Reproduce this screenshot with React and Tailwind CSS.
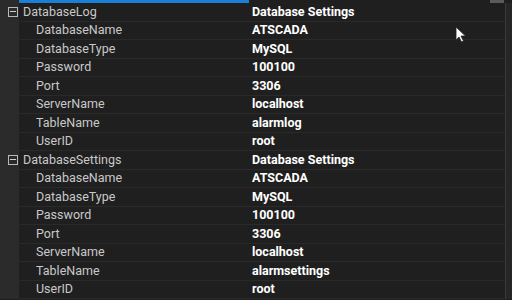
const groups = [
  {
    name: 'DatabaseLog',
    value: 'Database Settings',
    props: [
      ['DatabaseName', 'ATSCADA'],
      ['DatabaseType', 'MySQL'],
      ['Password', '100100'],
      ['Port', '3306'],
      ['ServerName', 'localhost'],
      ['TableName', 'alarmlog'],
      ['UserID', 'root'],
    ],
  },
  {
    name: 'DatabaseSettings',
    value: 'Database Settings',
    props: [
      ['DatabaseName', 'ATSCADA'],
      ['DatabaseType', 'MySQL'],
      ['Password', '100100'],
      ['Port', '3306'],
      ['ServerName', 'localhost'],
      ['TableName', 'alarmsettings'],
      ['UserID', 'root'],
    ],
  },
];

function Row({ label, value, group }) {
  return (
    <div className="flex h-[18.5px] border-b border-[#2a2a2a]">
      <div className="w-[19px] shrink-0 flex items-center justify-end pr-[1px] bg-[#2b2b2b]">
        {group && (
          <span className="w-[10px] h-[10px] border border-[#b8b8b8] flex items-center justify-center">
            <span className="w-[6px] h-px bg-[#d0d0d0]" />
          </span>
        )}
      </div>
      <div className={`w-[230px] shrink-0 flex items-center truncate text-[#c9c9c9] ${group ? 'pl-[4px]' : 'pl-[17px]'}`}>
        {label}
      </div>
      <div className="flex-1 flex items-center pl-[3px] font-bold text-white">{value}</div>
    </div>
  );
}

export default function App() {
  return (
    <div className="relative w-[512px] h-[300px] overflow-hidden bg-[#1f1f1f] text-[12.5px] leading-none font-['Roboto',sans-serif]">
      <div className="flex h-[3px]">
        <div className="w-[19px] bg-[#2b2b2b]" />
        <div className="w-[230px] bg-[#1c7fd6]" />
        <div className="flex-1" />
        <div className="w-[14px] bg-[#5a5a5a] mr-[8px]" />
      </div>
      <div className="flex">
        <div className="flex-1">
          {groups.map((g) => (
            <div key={g.name}>
              <Row label={g.name} value={g.value} group />
              {g.props.map(([k, v]) => (
                <Row key={k} label={k} value={v} />
              ))}
            </div>
          ))}
        </div>
        <div className="w-[7px] border-l border-[#3a3a3a] bg-[#262626]" />
      </div>
      <svg className="absolute left-[455px] top-[26px]" width="12" height="17" viewBox="0 0 12 17">
        <path d="M1 1 L1 14 L4 11 L6.5 16 L8.5 15 L6 10 L10.5 10 Z" fill="#ffffff" stroke="#222" strokeWidth="0.8" />
      </svg>
    </div>
  );
}
